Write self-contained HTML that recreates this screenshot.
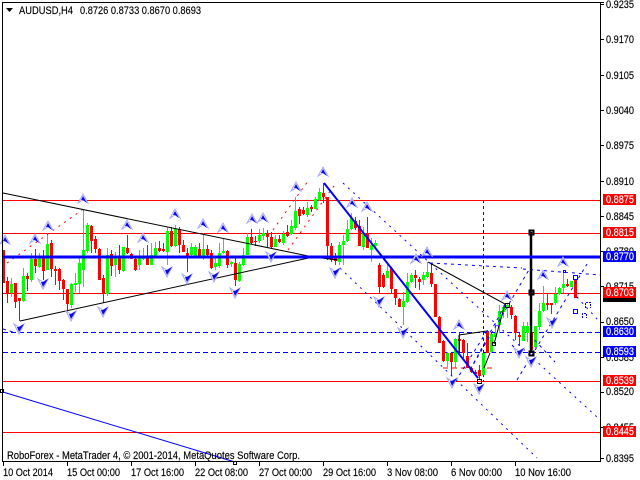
<!DOCTYPE html>
<html><head><meta charset="utf-8"><style>
html,body{margin:0;padding:0;background:#fff}
svg{display:block}
text{font-family:"Liberation Sans",sans-serif;font-size:11px;stroke:#000;stroke-width:.15}
g.w text{fill:#fff;stroke:#fff}
.c{shape-rendering:crispEdges;fill:none}
</style></head><body>
<svg width="640" height="480" viewBox="0 0 640 480" xmlns="http://www.w3.org/2000/svg">
<defs>
<g id="u"><path d="M0 -5L5 4L0 1L-5 4Z" fill="#f0f0ff" stroke="#a8a8fa" stroke-width="1"/><path d="M0 -3L4 4L0 1L-2 1Z" fill="#0a0ae6"/></g>
<g id="d"><path d="M-5 -5L0 -2L5 -5L0 5Z" fill="#f4f4ff" stroke="#a8a8fa" stroke-width="1"/><path d="M5 -5L0 -2L-2 -2L0 3Z" fill="#0a0ae6"/></g>
</defs>
<rect width="640" height="480" fill="#fff"/>

<!-- horizontal levels behind candles -->
<path class="c" stroke="#f00" d="M3 200.5H600M3 233.5H600M3 293.5H600M3 381.5H600M3 432.5H600"/>
<path class="c" stroke="#00f" stroke-dasharray="5 3" d="M3 332.5H600M3 352.5H600"/>
<path class="c" stroke="#00f" stroke-dasharray="3 3" d="M483.5 200V382"/>

<!-- candles -->
<path class="c" stroke="#0f0" d="M11.5 278V297M23.5 268V302M31.5 253V282M39.5 253V268M47.5 233V270M71.5 283V308M75.5 273V292M79.5 258V293M83.5 210V287M87.5 223V253M107.5 248V296M115.5 252V277M123.5 247V272M139.5 250V270M143.5 248V260M151.5 243V265M155.5 242V256M167.5 227V265M175.5 225V247M191.5 243V257M195.5 245V258M203.5 233V260M215.5 257V270M219.5 243V268M223.5 238V254M231.5 261V267M239.5 262V282M243.5 248V266M247.5 233V255M259.5 229V243M263.5 228V240M275.5 235V247M283.5 231V245M291.5 220V235M295.5 197V230M307.5 202V217M315.5 197V209M319.5 188V201M339.5 242V265M343.5 235V265M347.5 220V242M351.5 213V230M363.5 227V250M371.5 238V262M375.5 240V247M387.5 263V278M403.5 292V325M407.5 273V303M411.5 273V283M423.5 272V285M427.5 262V278M447.5 352V367M455.5 338V368M483.5 353V375M491.5 334V353M495.5 323V337M499.5 305V333M503.5 305V318M507.5 303V318M523.5 322V340M527.5 322V342M535.5 326V348M539.5 303V330M543.5 286V312M555.5 287V305M559.5 287V295M563.5 270V293M571.5 281V287"/>
<path class="c" stroke="#0f0" stroke-width="3" d="M11.5 284V293M23.5 276V301M31.5 259V280M39.5 256V267M47.5 244V270M71.5 284V305M75.5 283V285M79.5 263V284M83.5 250V270M87.5 225V251M107.5 255V294M115.5 257V265M123.5 247V271M139.5 256V265M143.5 257V259M151.5 255V265M155.5 248V256M167.5 231V252M175.5 229V246M191.5 247V255M195.5 247V256M203.5 249V257M215.5 263V267M219.5 253V266M223.5 251V253M231.5 262V264M239.5 264V281M243.5 255V265M247.5 237V255M259.5 235V241M263.5 233V236M275.5 239V247M283.5 234V243M291.5 226V234M295.5 211V228M307.5 208V215M315.5 199V209M319.5 192V200M339.5 245V262M343.5 241V245M347.5 229V241M351.5 218V229M363.5 233V247M371.5 245V250M375.5 243V246M387.5 271V278M403.5 301V307M407.5 282V302M411.5 275V282M423.5 275V280M427.5 272V277M447.5 353V361M455.5 339V362M483.5 353V375M491.5 334V352M495.5 333V337M499.5 311V325M503.5 307V312M507.5 305V308M523.5 326V341M527.5 326V333M535.5 326V347M539.5 311V327M543.5 303V311M555.5 294V303M559.5 288V294M563.5 284V288M571.5 281V287"/>
<path class="c" stroke="#f00" d="M3.5 250V283M7.5 277V303M15.5 283V308M19.5 298V321M27.5 273V291M35.5 249V273M43.5 250V280M51.5 240V277M55.5 266V285M59.5 268V290M63.5 279V300M67.5 289V310M91.5 225V253M95.5 236V253M99.5 248V280M103.5 275V303M111.5 250V276M119.5 245V274M127.5 235V254M131.5 253V259M135.5 258V271M147.5 245V265M159.5 241V252M163.5 243V252M171.5 227V247M179.5 227V253M183.5 240V252M187.5 248V272M199.5 243V257M207.5 245V257M211.5 250V269M227.5 250V268M235.5 257V286M251.5 229V244M255.5 236V246M267.5 230V248M271.5 232V248M279.5 235V243M287.5 225V237M299.5 207V224M303.5 207V215M311.5 205V212M323.5 183V203M327.5 197V260M331.5 243V262M335.5 253V265M355.5 217V230M359.5 220V246M367.5 217V248M379.5 263V293M383.5 273V288M391.5 267V293M395.5 289V305M399.5 298V307M415.5 270V288M419.5 277V290M431.5 264V287M435.5 284V317M439.5 316V343M443.5 340V362M451.5 353V375M459.5 333V352M463.5 339V358M467.5 343V368M471.5 367V373M475.5 370V376M479.5 365V380M487.5 330V353M511.5 305V319M515.5 315V340M519.5 333V346M531.5 327V353M547.5 294V310M551.5 303V314M567.5 279V287M575.5 280V298"/>
<path class="c" stroke="#f00" stroke-width="3" d="M3.5 250V283M7.5 281V294M15.5 283V302M19.5 298V301M27.5 276V279M35.5 259V266M43.5 257V271M51.5 243V269M55.5 269V271M59.5 269V281M63.5 280V289M67.5 289V304M91.5 226V241M95.5 239V249M99.5 249V280M103.5 278V293M111.5 254V266M119.5 257V270M127.5 248V253M131.5 254V259M135.5 259V270M147.5 256V265M159.5 248V251M163.5 249V251M171.5 231V246M179.5 229V245M183.5 245V252M187.5 253V256M199.5 249V257M207.5 249V255M211.5 253V268M227.5 251V265M235.5 263V280M251.5 237V243M255.5 241V242M267.5 233V237M271.5 237V247M279.5 239V242M287.5 232V236M299.5 209V216M303.5 210V214M311.5 207V209M323.5 193V197M327.5 197V246M331.5 246V260M335.5 256V261M355.5 221V228M359.5 226V246M367.5 233V248M379.5 265V287M383.5 275V287M391.5 268V289M395.5 289V298M399.5 299V307M415.5 275V278M419.5 279V282M431.5 273V284M435.5 284V317M439.5 317V343M443.5 341V361M451.5 353V362M459.5 339V341M463.5 340V353M467.5 356V368M471.5 368V372M475.5 372V374M479.5 370V376M487.5 331V353M511.5 307V315M515.5 316V333M519.5 335V337M531.5 332V350M547.5 303V305M551.5 303V305M567.5 284V286M575.5 280V298"/>

<!-- trend lines -->
<path fill="none" stroke="#000" stroke-width="1" d="M3 193L313 257L338 260M20 321L313 257M428 262L505 304L494 344M459 335L487 331M459 335V353M490 353L484 368"/>
<path fill="none" stroke="#f00" stroke-dasharray="2 5" d="M7 263L82 210M273 230L308 181M288 250L336 183"/>
<path fill="none" stroke="#f00" stroke-dasharray="5 4" d="M443 368L468 368M487 368L496 368"/>
<path fill="none" stroke="#00f" stroke-dasharray="2 5" d="M343 183L598 418M340 268L537 458M577 297L598 320"/>
<path fill="none" stroke="#00f" stroke-dasharray="3 4" d="M430 263L522 268M523 269L600 275M517 380L587 264M470 370L530 268M487 331L455 382M505 305L470 370M530 335L555 362M512 345L519 353M3 329L13 332"/>
<path fill="none" stroke="#00f" stroke-width="2" d="M324 183L478 378"/>
<path fill="none" stroke="#00f" d="M3 392L235 462"/>
<path fill="none" stroke="#000" stroke-width="2.5" d="M531 232V353"/>
<g class="c" stroke="#000"><rect x="0.5" y="389.5" width="3" height="3"/><rect x="233.5" y="461.5" width="3" height="3"/><rect x="505.5" y="303.5" width="4" height="4"/><rect x="492.5" y="342.5" width="3" height="3"/><rect x="477.5" y="379.5" width="4" height="4"/><rect x="529.5" y="230.5" width="4" height="4" stroke-width="2"/><rect x="529.5" y="290.5" width="4" height="4" stroke-width="2"/><rect x="529.5" y="351.5" width="4" height="4" stroke-width="2"/></g>
<g class="c" stroke="#00f"><rect x="573.5" y="275.5" width="4" height="4"/><rect x="573.5" y="309.5" width="4" height="4"/><rect x="563.5" y="270.5" width="2" height="2"/><path stroke-dasharray="2 1" d="M582.5 318V313.5H586.5V318M585.5 308V302.5H590.5V308"/></g>

<!-- thick resistance line -->
<path class="c" stroke="#00f" stroke-width="3" d="M3 257H600"/>

<!-- wave arrows -->
<use href="#u" x="83" y="199"/><use href="#u" x="48" y="226"/><use href="#u" x="35" y="239"/><use href="#u" x="5" y="240"/><use href="#u" x="127" y="225"/><use href="#u" x="143" y="238"/><use href="#u" x="175" y="214"/><use href="#u" x="203" y="224"/><use href="#u" x="223" y="228"/><use href="#u" x="252" y="219"/><use href="#u" x="263" y="218"/><use href="#u" x="296" y="187"/><use href="#u" x="323" y="172"/><use href="#u" x="352" y="203"/><use href="#u" x="367" y="207"/><use href="#u" x="416" y="259"/><use href="#u" x="427" y="252"/><use href="#u" x="459" y="325"/><use href="#u" x="507" y="296"/><use href="#u" x="543" y="275"/><use href="#u" x="563" y="262"/>
<use href="#d" x="43" y="284"/><use href="#d" x="19" y="329"/><use href="#d" x="71" y="316"/><use href="#d" x="103" y="312"/><use href="#d" x="167" y="272"/><use href="#d" x="187" y="279"/><use href="#d" x="214" y="277"/><use href="#d" x="235" y="293"/><use href="#d" x="271" y="257"/><use href="#d" x="335" y="273"/><use href="#d" x="379" y="302"/><use href="#d" x="403" y="333"/><use href="#d" x="452" y="383"/><use href="#d" x="479" y="389"/><use href="#d" x="519" y="353"/><use href="#d" x="531" y="362"/><use href="#d" x="552" y="323"/>

<!-- frame -->
<path class="c" stroke="#000" d="M2.5 2V462M2 2.5H604M600.5 2V462M2 461.5H600.5"/>
<path class="c" stroke="#000" d="M600 4.5H604M600 39.5H604M600 75.5H604M600 110.5H604M600 145.5H604M600 181.5H604M600 216.5H604M600 251.5H604M600 286.5H604M600 322.5H604M600 357.5H604M600 392.5H604M600 427.5H604M600 458.5H604M3.5 462V466M67.5 462V466M131.5 462V466M195.5 462V466M259.5 462V466M323.5 462V466M387.5 462V466M451.5 462V466M515.5 462V466"/>

<!-- title -->
<path d="M6 8H13L9.5 12Z" fill="#000"/>
<text x="19" y="14" textLength="54" lengthAdjust="spacingAndGlyphs">AUDUSD,H4</text>
<text x="80" y="14" textLength="121" lengthAdjust="spacingAndGlyphs">0.8726 0.8733 0.8670 0.8693</text>
<text x="7" y="459" textLength="293" lengthAdjust="spacingAndGlyphs">RoboForex - MetaTrader 4, © 2001-2014, MetaQuotes Software Corp.</text>

<!-- right axis -->
<g>
<text x="606" y="8" textLength="28" lengthAdjust="spacingAndGlyphs">0.9235</text>
<text x="606" y="43" textLength="28" lengthAdjust="spacingAndGlyphs">0.9170</text>
<text x="606" y="79" textLength="28" lengthAdjust="spacingAndGlyphs">0.9105</text>
<text x="606" y="114" textLength="28" lengthAdjust="spacingAndGlyphs">0.9040</text>
<text x="606" y="149" textLength="28" lengthAdjust="spacingAndGlyphs">0.8975</text>
<text x="606" y="185" textLength="28" lengthAdjust="spacingAndGlyphs">0.8910</text>
<text x="606" y="220" textLength="28" lengthAdjust="spacingAndGlyphs">0.8845</text>
<text x="606" y="255" textLength="28" lengthAdjust="spacingAndGlyphs">0.8780</text>
<text x="606" y="290" textLength="28" lengthAdjust="spacingAndGlyphs">0.8715</text>
<text x="606" y="325" textLength="28" lengthAdjust="spacingAndGlyphs">0.8650</text>
<text x="606" y="361" textLength="28" lengthAdjust="spacingAndGlyphs">0.8585</text>
<text x="606" y="395" textLength="28" lengthAdjust="spacingAndGlyphs">0.8520</text>
<text x="606" y="431" textLength="28" lengthAdjust="spacingAndGlyphs">0.8455</text>
<text x="606" y="462" textLength="28" lengthAdjust="spacingAndGlyphs">0.8395</text>
</g>

<!-- price tags -->
<g class="c">
<rect x="603" y="291" width="33" height="11" fill="#000"/>
<rect x="603" y="194" width="33" height="11" fill="#f00"/>
<rect x="603" y="227" width="33" height="11" fill="#f00"/>
<rect x="603" y="251" width="33" height="11" fill="#00f"/>
<rect x="603" y="287" width="33" height="11" fill="#f00"/>
<rect x="603" y="326" width="33" height="11" fill="#00f"/>
<rect x="603" y="346" width="33" height="11" fill="#00f"/>
<rect x="603" y="375" width="33" height="11" fill="#f00"/>
<rect x="603" y="426" width="33" height="11" fill="#f00"/>
</g>
<g class="w">
<text x="606" y="203" textLength="28" lengthAdjust="spacingAndGlyphs">0.8875</text>
<text x="606" y="236" textLength="28" lengthAdjust="spacingAndGlyphs">0.8815</text>
<text x="606" y="260" textLength="28" lengthAdjust="spacingAndGlyphs">0.8770</text>
<text x="606" y="296" textLength="28" lengthAdjust="spacingAndGlyphs">0.8703</text>
<text x="606" y="335" textLength="28" lengthAdjust="spacingAndGlyphs">0.8630</text>
<text x="606" y="355" textLength="28" lengthAdjust="spacingAndGlyphs">0.8593</text>
<text x="606" y="384" textLength="28" lengthAdjust="spacingAndGlyphs">0.8539</text>
<text x="606" y="435" textLength="28" lengthAdjust="spacingAndGlyphs">0.8445</text>
</g>

<!-- date axis -->
<g>
<text x="3" y="476" textLength="50" lengthAdjust="spacingAndGlyphs">10 Oct 2014</text>
<text x="67" y="476" textLength="53" lengthAdjust="spacingAndGlyphs">15 Oct 00:00</text>
<text x="131" y="476" textLength="53" lengthAdjust="spacingAndGlyphs">17 Oct 16:00</text>
<text x="195" y="476" textLength="53" lengthAdjust="spacingAndGlyphs">22 Oct 08:00</text>
<text x="259" y="476" textLength="53" lengthAdjust="spacingAndGlyphs">27 Oct 00:00</text>
<text x="323" y="476" textLength="53" lengthAdjust="spacingAndGlyphs">29 Oct 16:00</text>
<text x="387" y="476" textLength="51" lengthAdjust="spacingAndGlyphs">3 Nov 08:00</text>
<text x="451" y="476" textLength="51" lengthAdjust="spacingAndGlyphs">6 Nov 00:00</text>
<text x="515" y="476" textLength="56" lengthAdjust="spacingAndGlyphs">10 Nov 16:00</text>
</g>
</svg>
</body></html>
